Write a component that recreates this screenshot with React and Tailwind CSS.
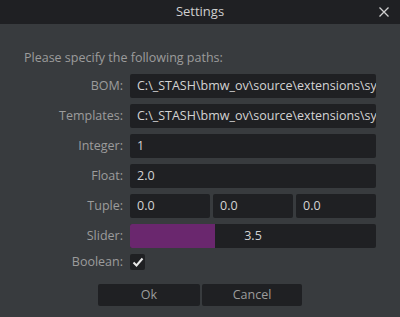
import React from 'react';

const font = { fontFamily: '"Open Sans", "Noto Sans", sans-serif' };

const Row = ({ label, children }) => (
    <div className="flex items-center h-[24px]">
        <div className="w-[130px] pr-[7px] text-right text-[12.5px] text-[#9c9c9c] whitespace-nowrap">{label}</div>
        <div className="flex-1 flex gap-[3px] min-w-0">{children}</div>
    </div>
);

const Field = ({ value }) => (
    <div className="flex-1 min-w-0 h-[24px] bg-[#1f2023] rounded-[2px] pl-[7px] flex items-center text-[12.5px] text-[#d4d4d4] overflow-hidden whitespace-nowrap">
        {value}
    </div>
);

const App = () => {
    const path = 'C:\\_STASH\\bmw_ov\\source\\extensions\\sync\\paths';
    return (
        <div className="w-[400px] h-[317px] bg-[#383b3e] flex flex-col" style={font}>
            <div className="h-[24px] bg-[#1f2023] relative flex items-center justify-center">
                <span className="text-[13px] text-[#cfcfcf]">Settings</span>
                <svg className="absolute left-[379px] top-[7px]" width="10" height="10" viewBox="0 0 10 10">
                    <path d="M0.5 0.5 L9.5 9.5 M9.5 0.5 L0.5 9.5" stroke="#d0d0d0" strokeWidth="1.3" />
                </svg>
            </div>
            <div className="pl-[24px] pt-[25px] text-[12.5px] text-[#9c9c9c] leading-[18px]">Please specify the following paths:</div>
            <div className="flex flex-col gap-[6px] pt-[7px] pr-[24px]">
                <Row label="BOM:"><Field value={path} /></Row>
                <Row label="Templates:"><Field value={path} /></Row>
                <Row label="Integer:"><Field value="1" /></Row>
                <Row label="Float:"><Field value="2.0" /></Row>
                <Row label="Tuple:">
                    <Field value="0.0" />
                    <Field value="0.0" />
                    <Field value="0.0" />
                </Row>
                <Row label="Slider:">
                    <div className="flex-1 h-[24px] bg-[#1f2023] rounded-[2px] relative overflow-hidden flex items-center justify-center">
                        <div className="absolute left-0 top-0 h-full w-[85px] bg-[#6a276e]" />
                        <span className="relative text-[12.5px] text-[#d4d4d4]">3.5</span>
                    </div>
                </Row>
                <div className="flex items-center h-[16px]">
                    <div className="w-[130px] pr-[7px] text-right text-[12.5px] text-[#9c9c9c]">Boolean:</div>
                    <div className="w-[15px] h-[16px] bg-[#1f2023] rounded-[2px] flex items-center justify-center">
                        <svg width="12" height="10" viewBox="0 0 12 10">
                            <path d="M1.5 5.5 L4.5 8.5 L10.5 1.5" stroke="#e8e8e8" strokeWidth="2" fill="none" />
                        </svg>
                    </div>
                </div>
            </div>
            <div className="flex justify-center gap-[2px] pt-[14px]">
                <button className="w-[102px] h-[22px] bg-[#1f2023] rounded-[2px] text-[12.5px] text-[#9c9c9c]">Ok</button>
                <button className="w-[100px] h-[22px] bg-[#1f2023] rounded-[2px] text-[12.5px] text-[#9c9c9c]">Cancel</button>
            </div>
        </div>
    );
};

export default App;
